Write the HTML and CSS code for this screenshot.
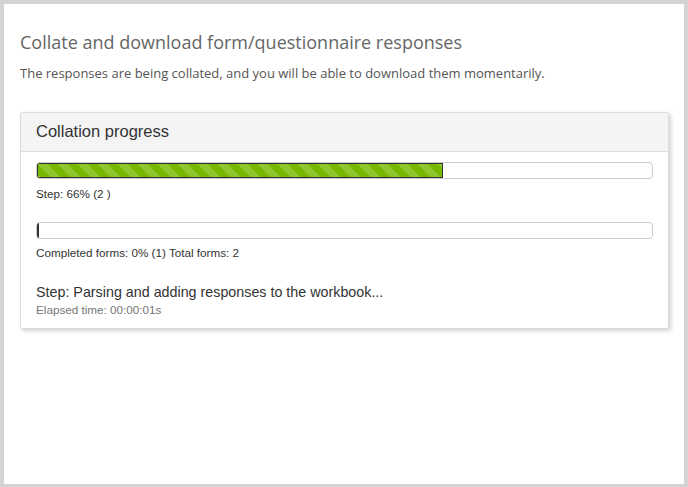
FILE: index.html
```html
<!DOCTYPE html>
<html>
<head>
<meta charset="utf-8">
<link rel="stylesheet" href="styles.css">
</head>
<body>
<div class="frame">
  <h1 class="title">Collate and download form/questionnaire responses</h1>
  <p class="lead">The responses are being collated, and you will be able to download them momentarily.</p>
  <div class="panel">
    <div class="panel-heading">Collation progress</div>
    <div class="panel-body">
      <div class="progress"><div class="bar striped" style="width:66%"></div></div>
      <div class="label">Step: 66% (2 )</div>
      <div class="progress second"><div class="bar" style="width:0%"></div></div>
      <div class="label tight">Completed forms: 0% (1) Total forms: 2</div>
      <div class="step">Step: Parsing and adding responses to the workbook...</div>
      <div class="elapsed">Elapsed time: 00:00:01s</div>
    </div>
  </div>
</div>
</body>
</html>
```

FILE: styles.css
```css
html, body {
  margin: 0;
  padding: 0;
  background: #d3d3d3;
}
body {
  padding: 4px 4px 3px 4px;
  height: 487px;
  box-sizing: border-box;
}
.frame {
  background: #fff;
  height: 480px;
  padding: 0 16px;
  box-sizing: border-box;
  overflow: hidden;
}
.title {
  margin: 0;
  padding-top: 26px;
  font-family: "Open Sans", sans-serif;
  font-weight: 400;
  font-size: 18px;
  line-height: 24px;
  color: #666;
}
.lead {
  margin: 10px 0 0;
  font-family: "Open Sans", sans-serif;
  font-size: 13px;
  line-height: 18px;
  color: #555;
}
.panel {
  margin-top: 30px;
  width: 647px;
  border: 1px solid #ddd;
  border-radius: 2px;
  box-shadow: 2px 2px 4px rgba(0,0,0,0.18);
  font-family: "Liberation Sans", Arial, sans-serif;
}
.panel-heading {
  background: #f4f4f4;
  border-bottom: 1px solid #ddd;
  padding: 9px 15px 10px;
  font-size: 16.5px;
  line-height: 19px;
  color: #333;
}
.panel-body {
  padding: 10px 15px 11px;
}
.progress {
  height: 15px;
  border: 1px solid #ccc;
  border-radius: 4px;
  background: #fff;
  display: flex;
  overflow: hidden;
}
.bar {
  box-sizing: border-box;
  border: 1px solid #333;
  height: 15px;
  background: #7ab800;
  flex: none;
}
.striped {
  background-color: #76b900;
  background-image: linear-gradient(45deg, rgba(255,255,255,0.18) 25%, transparent 25%, transparent 50%, rgba(255,255,255,0.18) 50%, rgba(255,255,255,0.18) 75%, transparent 75%, transparent);
  background-size: 20px 20px;
}
.label {
  margin-top: 8px;
  font-size: 11.7px;
  line-height: 14px;
  color: #333;
}
.second {
  margin-top: 21px;
}
.tight {
  margin-top: 7px;
}
.step {
  margin-top: 24px;
  font-size: 14.3px;
  line-height: 16px;
  color: #333;
}
.elapsed {
  margin-top: 3px;
  font-size: 11.7px;
  line-height: 14px;
  color: #777;
}
```
